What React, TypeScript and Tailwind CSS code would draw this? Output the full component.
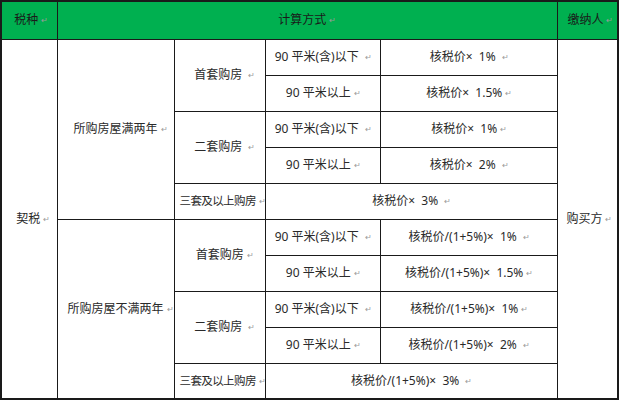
const Mark = () => (
  <span className="ml-[3px] align-[1px] text-[8px] text-[#9a9a9a]">↵</span>
);

const cell = "border border-[#1a1a1a] text-center align-middle";
const hRow = "h-[36px]";

const Val = ({ children }: { children: string }) => (
  <span className="whitespace-pre">
    {children}
    <Mark />
  </span>
);

const Block = ({
  title,
  rows,
  third,
}: {
  title: string;
  rows: { label: string; lo: string; hi: string }[];
  third: string;
}) => (
  <>
    {rows.map((r, i) => (
      <Group key={i} label={r.label} lo={r.lo} hi={r.hi} title={i === 0 ? title : null} />
    ))}
    <tr className={hRow}>
      <td className={cell + " whitespace-nowrap px-0 pl-[5px] text-[11.5px] tracking-[-0.6px]"}>
        三套及以上购房
        <Mark />
      </td>
      <td className={cell} colSpan={2}>
        <Val>{third}</Val>
      </td>
    </tr>
  </>
);

const Group = ({
  label,
  lo,
  hi,
  title,
}: {
  label: string;
  lo: string;
  hi: string;
  title: string | null;
}) => (
  <>
    <tr className={hRow}>
      {title === "所购房屋满两年" && (
        <td className={cell} rowSpan={10}>
          <span className="pl-[8px]">
            契税
            <Mark />
          </span>
        </td>
      )}
      {title && (
        <td className={cell} rowSpan={5}>
          <span className="pl-[10px]">
            {title}
            <Mark />
          </span>
        </td>
      )}
      <td className={cell} rowSpan={2}>
        <span className="pl-[10px]">
          {label}
          <Mark />
        </span>
      </td>
      <td className={cell}>
        <Val>90 平米(含)以下 </Val>
      </td>
      <td className={cell}>
        <Val>{lo}</Val>
      </td>
      {title === "所购房屋满两年" && (
        <td className={cell} rowSpan={10}>
          <span className="pl-[4px]">
            购买方
            <Mark />
          </span>
        </td>
      )}
    </tr>
    <tr className={hRow}>
      <td className={cell}>
        <Val>90 平米以上</Val>
      </td>
      <td className={cell}>
        <Val>{hi}</Val>
      </td>
    </tr>
  </>
);

export default function App() {
  return (
    <div
      className="h-[400px] w-[620px] overflow-hidden bg-white text-[12px] text-[#2a2a2a]"
      style={{ fontFamily: '"Noto Sans", "Noto Sans CJK SC", sans-serif' }}
    >
      <table className="table-fixed border-collapse border-2 border-[#1a1a1a]">
        <colgroup>
          <col className="w-[56px]" />
          <col className="w-[117px]" />
          <col className="w-[91px]" />
          <col className="w-[115px]" />
          <col className="w-[177px]" />
          <col className="w-[60px]" />
        </colgroup>
        <thead>
          <tr className="h-[38px] bg-[#00b050] text-[#1a1a1a]">
            <td className={cell}>
              <span className="pl-[4px]">
                税种
                <Mark />
              </span>
            </td>
            <td className={cell} colSpan={4}>
              计算方式
              <Mark />
            </td>
            <td className={cell}>
              <span className="pl-[6px]">
                缴纳人
                <Mark />
              </span>
            </td>
          </tr>
        </thead>
        <tbody>
          <Block
            title="所购房屋满两年"
            rows={[
              { label: "首套购房 ", lo: "核税价×  1% ", hi: "核税价×  1.5%" },
              { label: "二套购房 ", lo: "核税价×  1%", hi: "核税价×  2% " },
            ]}
            third="核税价×  3% "
          />
          <Block
            title="所购房屋不满两年"
            rows={[
              { label: "首套购房", lo: "核税价/(1+5%)×  1% ", hi: "核税价/(1+5%)×  1.5%" },
              { label: "二套购房 ", lo: "核税价/(1+5%)×  1%", hi: "核税价/(1+5%)×  2% " },
            ]}
            third="核税价/(1+5%)×  3% "
          />
        </tbody>
      </table>
    </div>
  );
}
